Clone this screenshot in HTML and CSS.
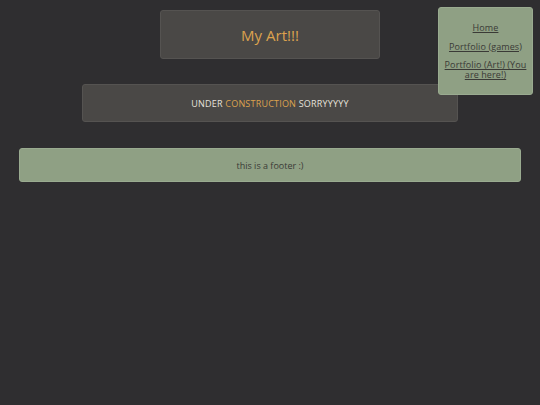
FILE: index.html
```html
<!DOCTYPE html>
<html>
<head>
<meta charset="utf-8">
<link rel="stylesheet" href="styles.css">
</head>
<body>
<header class="title-box"><h1 class="title">My Art!!!</h1></header>
<nav class="nav">
  <a href="#">Home</a>
  <a href="#">Portfolio (games)</a>
  <a href="#">Portfolio (Art!) (You are here!)</a>
</nav>
<main class="main-box"><p>UNDER <span class="hl">CONSTRUCTION</span> SORRYYYYY</p></main>
<footer class="footer"><p>this is a footer :)</p></footer>
</body>
</html>
```
FILE: styles.css
```css
html, body { margin: 0; padding: 0; }
body {
  background: #2f2e30;
  font-family: "Open Sans", "DejaVu Sans", sans-serif;
  min-height: 405px;
  display: flex;
  flex-direction: column;
  align-items: center;
  padding-top: 10px;
  box-sizing: border-box;
}
.title-box {
  width: 220px;
  height: 49px;
  box-sizing: border-box;
  background: #4a4846;
  border: 1px solid #555351;
  border-radius: 3px;
  display: flex;
  align-items: center;
  justify-content: center;
}
.title {
  margin: 0;
  font-size: 15px;
  font-weight: 500;
  color: #dca24e;
}
.nav {
  position: absolute;
  top: 7px;
  left: 438px;
  width: 95px;
  height: 88px;
  box-sizing: border-box;
  background: #8fa084;
  border: 1px solid #9aab90;
  border-radius: 3px;
  display: flex;
  flex-direction: column;
  align-items: center;
  padding: 15px 4px 0;
}
.nav a {
  color: #3a3a36;
  font-size: 9px;
  line-height: 10px;
  text-align: center;
  letter-spacing: 0.1px;
}
.nav a + a { margin-top: 8.5px; }
.main-box {
  margin-top: 25px;
  width: 376px;
  height: 38px;
  box-sizing: border-box;
  background: #4a4846;
  border: 1px solid #555351;
  border-radius: 3px;
  display: flex;
  align-items: center;
  justify-content: center;
}
.main-box p {
  margin: 0;
  font-size: 9px;
  color: #e6e2dc;
  letter-spacing: 0.2px;
}
.hl { color: #dca24e; }
.footer {
  margin-top: 26px;
  width: 502px;
  height: 34px;
  box-sizing: border-box;
  background: #8fa084;
  border: 1px solid #9aab90;
  border-radius: 3px;
  display: flex;
  align-items: center;
  justify-content: center;
}
.footer p {
  margin: 0;
  font-size: 9px;
  color: #3a3a36;
}
```
